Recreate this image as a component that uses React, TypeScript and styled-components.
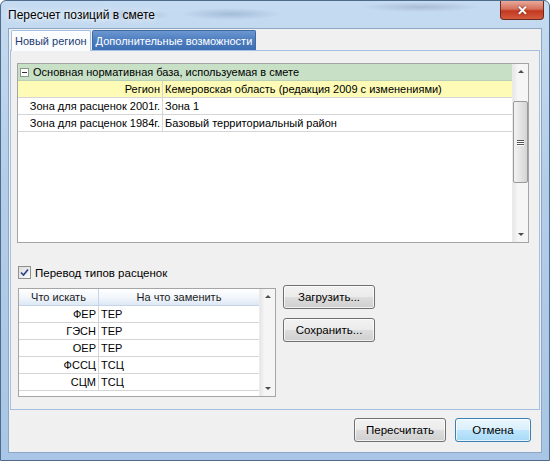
import React from 'react';
import styled, { createGlobalStyle } from 'styled-components';

const GlobalStyle = createGlobalStyle`
  html, body { margin: 0; padding: 0; background: #ffffff; }
  body { font-family: "Liberation Sans", Arial, sans-serif; font-size: 11px; color: #000; }
`;

const Window = styled.div`
  width: 550px;
  height: 461px;
  box-sizing: border-box;
  display: flex;
  flex-direction: column;
  border: 1px solid #4f6b8c;
  border-radius: 6px 6px 0 0;
  background:
    radial-gradient(ellipse 40px 6px at 130px 14px, rgba(90,120,160,0.35), transparent),
    radial-gradient(ellipse 50px 6px at 230px 13px, rgba(90,120,160,0.3), transparent),
    radial-gradient(ellipse 60px 5px at 420px 6px, rgba(110,120,150,0.3), transparent),
    linear-gradient(180deg, #c5dbf1 0%, #b3cde9 40%, #a9c6e6 100%);
  padding: 0 7px 7px 7px;
  overflow: hidden;
`;

const TitleBar = styled.div`
  height: 27px;
  display: flex;
  align-items: flex-start;
  justify-content: space-between;
`;

const Title = styled.div`
  font-size: 12px;
  padding-top: 7px;
  color: #000;
  text-shadow: 0 0 8px #fff, 0 0 4px #fff;
`;

const CloseButton = styled.div`
  width: 44px;
  height: 19px;
  margin-right: -2px;
  box-sizing: border-box;
  border: 1px solid #6d2a22;
  border-top: none;
  border-radius: 0 0 4px 4px;
  background: linear-gradient(180deg, #e9a99a 0%, #d5705c 45%, #c2381f 55%, #d35a3e 100%);
  display: flex;
  align-items: center;
  justify-content: center;
  color: #fff;
  font-weight: bold;
  font-size: 13px;
  text-shadow: 0 0 2px #5a1000;
`;

const Client = styled.div`
  flex: 1;
  display: flex;
  flex-direction: column;
  background: #f0f0f0;
  border: 1px solid #8ea7c4;
  padding: 1px 1px 0 1px;
`;

const TabStrip = styled.div`
  display: flex;
  height: 20px;
  padding-left: 1px;
  align-items: flex-end;
`;

const Tab = styled.div<{ $active?: boolean }>`
  height: ${p => (p.$active ? '21px' : '20px')};
  margin-bottom: ${p => (p.$active ? '-1px' : '0')};
  box-sizing: border-box;
  padding: 0 3px;
  display: flex;
  align-items: center;
  border: 1px solid ${p => (p.$active ? '#a3c0e3' : '#3e6ba5')};
  border-bottom: none;
  border-radius: 2px 2px 0 0;
  background: ${p =>
    p.$active ? '#fbfcfe' : 'linear-gradient(180deg, #6b97d0 0%, #4d7dc0 50%, #3f6fb3 100%)'};
  color: ${p => (p.$active ? '#1c3d74' : '#ffffff')};
  margin-right: 1px;
  position: relative;
  z-index: ${p => (p.$active ? 1 : 0)};
`;

const TabPanel = styled.div`
  height: 360px;
  box-sizing: border-box;
  border: 1px solid #a3c0e3;
  background: #f0f0f0;
  padding: 12px 12px 0 6px;
  display: flex;
  flex-direction: column;
`;

const GridBox = styled.div<{ $w: number; $h: number }>`
  width: ${p => p.$w}px;
  height: ${p => p.$h}px;
  box-sizing: border-box;
  border: 1px solid #a5a5a5;
  background: #fff;
  display: flex;
`;

const GridBody = styled.div`
  flex: 1;
  display: flex;
  flex-direction: column;
  overflow: hidden;
`;

const Row = styled.div<{ $bg?: string; $cols: string }>`
  display: grid;
  grid-template-columns: ${p => p.$cols};
  height: 17px;
  box-sizing: border-box;
  border-bottom: 1px solid #d5d5d5;
  background: ${p => p.$bg || '#fff'};
  flex-shrink: 0;
`;

const GroupRow = styled.div`
  height: 17px;
  box-sizing: border-box;
  background: #c7e0c6;
  border-bottom: 1px solid #b8d0b8;
  display: flex;
  align-items: center;
  gap: 4px;
  padding-left: 2px;
`;

const Minus = styled.span`
  width: 7px;
  height: 7px;
  border: 1px solid #8a9a8a;
  background: #fff;
  display: inline-flex;
  align-items: center;
  justify-content: center;
  &::after {
    content: '';
    width: 5px;
    height: 1px;
    background: #333;
  }
`;

const Cell = styled.div<{ $align?: 'left' | 'right' | 'center'; $divider?: boolean }>`
  text-align: ${p => p.$align || 'left'};
  padding: 0 2px;
  line-height: 16px;
  white-space: nowrap;
  overflow: hidden;
  border-right: ${p => (p.$divider ? '1px solid #d5d5d5' : 'none')};
`;

const HeaderRow = styled(Row)`
  height: 17px;
  background: linear-gradient(180deg, #ffffff 0%, #f3f7fc 50%, #dde8f5 100%);
  border-bottom: 1px solid #c5d4e6;
`;

const HeaderCell = styled(Cell)`
  border-right: ${p => (p.$divider ? '1px solid #c5d4e6' : 'none')};
  color: #1a1a1a;
`;

const Scrollbar = styled.div`
  width: 15px;
  display: flex;
  flex-direction: column;
  align-items: center;
  background: linear-gradient(90deg, #e6e6e6 0%, #f5f5f5 30%, #f5f5f5 100%);
  border-left: 1px solid #ebebeb;
`;

const Arrow = styled.div<{ $down?: boolean }>`
  height: 15px;
  width: 15px;
  display: flex;
  align-items: center;
  justify-content: center;
  &::after {
    content: '';
    border-left: 3px solid transparent;
    border-right: 3px solid transparent;
    ${p => (p.$down ? 'border-top: 3px solid #4d4d4d;' : 'border-bottom: 3px solid #4d4d4d;')}
  }
`;

const Track = styled.div`
  flex: 1;
  width: 100%;
  display: flex;
  flex-direction: column;
`;

const Thumb = styled.div<{ $top: number; $h: number }>`
  margin-top: ${p => p.$top}px;
  height: ${p => p.$h}px;
  width: 15px;
  box-sizing: border-box;
  border: 1px solid #999;
  border-radius: 2px;
  background: linear-gradient(90deg, #f2f2f2 0%, #e4e4e4 50%, #d4d4d4 100%);
  display: flex;
  flex-direction: column;
  align-items: center;
  justify-content: center;
  gap: 1px;
`;

const Grip = styled.span`
  width: 7px;
  height: 1px;
  background: #555;
  box-shadow: 0 1px 0 #fff;
`;

const CheckRow = styled.label`
  display: flex;
  align-items: center;
  gap: 4px;
  margin-top: 22px;
  margin-left: 1px;
  height: 15px;
  font-size: 11.5px;
`;

const CheckBox = styled.span`
  width: 13px;
  height: 13px;
  box-sizing: border-box;
  border: 1px solid #8f8f8f;
  background: linear-gradient(135deg, #dcdcdc 0%, #fbfbfb 100%);
  display: inline-flex;
  align-items: center;
  justify-content: center;
`;

const Lower = styled.div`
  display: flex;
  gap: 7px;
  margin-top: 8px;
  margin-left: 1px;
`;

const SideButtons = styled.div`
  display: flex;
  flex-direction: column;
  gap: 9px;
  margin-top: -3px;
`;

const Button = styled.div<{ $w: number; $primary?: boolean }>`
  width: ${p => p.$w}px;
  height: 24px;
  box-sizing: border-box;
  border: 1px solid ${p => (p.$primary ? '#3c7fb1' : '#707070')};
  border-radius: 3px;
  background: ${p =>
    p.$primary
      ? 'linear-gradient(180deg, #eaf6fd 0%, #d9f0fc 50%, #bee6fd 51%, #a7d9f5 100%)'
      : 'linear-gradient(180deg, #f2f2f2 0%, #ebebeb 50%, #dddddd 51%, #cfcfcf 100%)'};
  box-shadow: inset 0 0 0 1px rgba(255,255,255,0.7);
  display: flex;
  align-items: center;
  justify-content: center;
  color: #000;
  font-size: 11.5px;
`;

const Footer = styled.div`
  flex: 1;
  display: flex;
  justify-content: flex-end;
  align-items: flex-start;
  gap: 9px;
  padding: 8px 9px 0 0;
`;

const upperCols = '145px 1fr';
const lowerCols = '80px 1fr';

const replaceRows: [string, string][] = [
  ['ФЕР', 'ТЕР'],
  ['ГЭСН', 'ТЕР'],
  ['ОЕР', 'ТЕР'],
  ['ФССЦ', 'ТСЦ'],
  ['СЦМ', 'ТСЦ'],
];

export default function App() {
  return (
    <>
      <GlobalStyle />
      <Window>
        <TitleBar>
          <Title>Пересчет позиций в смете</Title>
          <CloseButton>✕</CloseButton>
        </TitleBar>
        <Client>
          <TabStrip>
            <Tab $active>Новый регион</Tab>
            <Tab>Дополнительные возможности</Tab>
          </TabStrip>
          <TabPanel>
            <GridBox $w={512} $h={180}>
              <GridBody>
                <GroupRow>
                  <Minus />
                  Основная нормативная база, используемая в смете
                </GroupRow>
                <Row $cols={upperCols} $bg="#fdfbb5">
                  <Cell $align="right" $divider>Регион</Cell>
                  <Cell>Кемеровская область (редакция 2009 с изменениями)</Cell>
                </Row>
                <Row $cols={upperCols}>
                  <Cell $align="right" $divider>Зона для расценок 2001г.</Cell>
                  <Cell>Зона 1</Cell>
                </Row>
                <Row $cols={upperCols}>
                  <Cell $align="right" $divider>Зона для расценок 1984г.</Cell>
                  <Cell>Базовый территориальный район</Cell>
                </Row>
              </GridBody>
              <Scrollbar>
                <Arrow />
                <Track>
                  <Thumb $top={22} $h={82}>
                    <Grip />
                    <Grip />
                    <Grip />
                  </Thumb>
                </Track>
                <Arrow $down />
              </Scrollbar>
            </GridBox>

            <CheckRow>
              <CheckBox>
                <svg width="9" height="9" viewBox="0 0 9 9">
                  <path d="M1 4.5 L3.5 7 L8 1.5" fill="none" stroke="#2a3f8f" strokeWidth="1.6" />
                </svg>
              </CheckBox>
              Перевод типов расценок
            </CheckRow>

            <Lower>
              <GridBox $w={258} $h={109}>
                <GridBody>
                  <HeaderRow $cols={lowerCols}>
                    <HeaderCell $align="center" $divider>Что искать</HeaderCell>
                    <HeaderCell $align="center">На что заменить</HeaderCell>
                  </HeaderRow>
                  {replaceRows.map(([from, to]) => (
                    <Row key={from} $cols={lowerCols}>
                      <Cell $align="right" $divider>{from}</Cell>
                      <Cell>{to}</Cell>
                    </Row>
                  ))}
                </GridBody>
                <Scrollbar>
                  <Arrow />
                  <Track />
                  <Arrow $down />
                </Scrollbar>
              </GridBox>
              <SideButtons>
                <Button $w={92}>Загрузить...</Button>
                <Button $w={92}>Сохранить...</Button>
              </SideButtons>
            </Lower>
          </TabPanel>
          <Footer>
            <Button $w={92}>Пересчитать</Button>
            <Button $w={76} $primary>Отмена</Button>
          </Footer>
        </Client>
      </Window>
    </>
  );
}
